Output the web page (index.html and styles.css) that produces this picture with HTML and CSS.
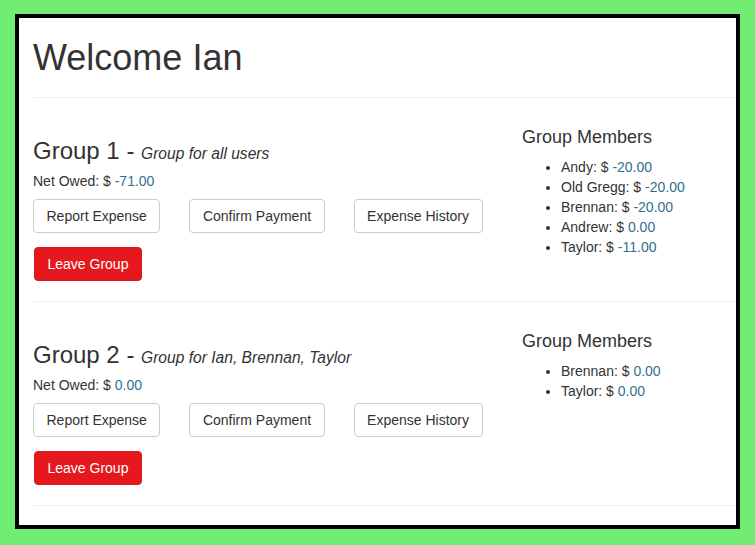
FILE: index.html
```html
<!DOCTYPE html>
<html>
<head>
<meta charset="utf-8">
<link rel="stylesheet" href="styles.css">
</head>
<body>
<div class="frame">
  <div class="page">
    <h1 class="title">Welcome Ian</h1>
    <hr class="rule">
    <section class="group">
      <div class="main">
        <h3 class="group-name">Group 1 - <small class="desc">Group for all users</small></h3>
        <p class="owed">Net Owed: $ <span class="val">-71.00</span></p>
        <div class="actions">
          <button class="btn">Report Expense</button>
          <button class="btn">Confirm Payment</button>
          <button class="btn">Expense History</button>
        </div>
        <button class="btn btn-danger">Leave Group</button>
      </div>
      <div class="members">
        <h4 class="members-title">Group Members</h4>
        <ul class="member-list">
          <li>Andy: $ <span class="val">-20.00</span></li>
          <li>Old Gregg: $ <span class="val">-20.00</span></li>
          <li>Brennan: $ <span class="val">-20.00</span></li>
          <li>Andrew: $ <span class="val">0.00</span></li>
          <li>Taylor: $ <span class="val">-11.00</span></li>
        </ul>
      </div>
    </section>
    <hr class="rule">
    <section class="group">
      <div class="main">
        <h3 class="group-name">Group 2 - <small class="desc">Group for Ian, Brennan, Taylor</small></h3>
        <p class="owed">Net Owed: $ <span class="val">0.00</span></p>
        <div class="actions">
          <button class="btn">Report Expense</button>
          <button class="btn">Confirm Payment</button>
          <button class="btn">Expense History</button>
        </div>
        <button class="btn btn-danger">Leave Group</button>
      </div>
      <div class="members">
        <h4 class="members-title">Group Members</h4>
        <ul class="member-list">
          <li>Brennan: $ <span class="val">0.00</span></li>
          <li>Taylor: $ <span class="val">0.00</span></li>
        </ul>
      </div>
    </section>
    <hr class="rule">
  </div>
</div>
</body>
</html>
```
FILE: styles.css
```css
html, body {
  margin: 0;
  padding: 0;
}
body {
  background: #71ee71;
  font-family: "Liberation Sans", Arial, sans-serif;
  font-size: 14px;
  line-height: 20px;
  color: #333;
  height: 545px;
  overflow: hidden;
}
.frame {
  margin: 14px 0 0 15px;
  width: 717px;
  height: 507px;
  border: 4px solid #000;
  background: #fff;
  overflow: hidden;
}
.page {
  padding-left: 14px;
}
.title {
  margin: 20px 0 0;
  font-size: 36px;
  line-height: 39.6px;
  font-weight: normal;
  color: #333;
}
.rule {
  margin: 0;
  border: 0;
  border-top: 1px solid #eee;
  height: 0;
}
.title + .rule {
  margin-top: 19px;
}
.group {
  display: grid;
  grid-template-columns: 489px 1fr;
  padding-bottom: 20px;
}
.group-name {
  margin: 40px 0 7px;
  font-size: 24px;
  line-height: 26px;
  font-weight: normal;
  color: #333;
}
.desc {
  font-size: 15.6px;
  line-height: 1;
  font-style: italic;
  color: #333;
}
.owed {
  margin: 0 0 8px;
}
.val {
  color: #31708f;
}
.actions {
  display: flex;
  gap: 29px;
  margin-bottom: 14px;
}
.btn {
  display: inline-block;
  font-family: inherit;
  font-size: 14px;
  line-height: 20px;
  padding: 6px 12.5px;
  border: 1px solid #ccc;
  border-radius: 4px;
  background: #fff;
  color: #333;
  margin: 0;
}
.btn-danger {
  background: #e5191d;
  border-color: #d8171b;
  color: #fff;
  margin-left: 1px;
}
.members-title {
  margin: 30px 0 10px;
  font-size: 18px;
  line-height: 19.8px;
  font-weight: normal;
  color: #333;
}
.member-list {
  margin: 0;
  padding-left: 39px;
}
```
